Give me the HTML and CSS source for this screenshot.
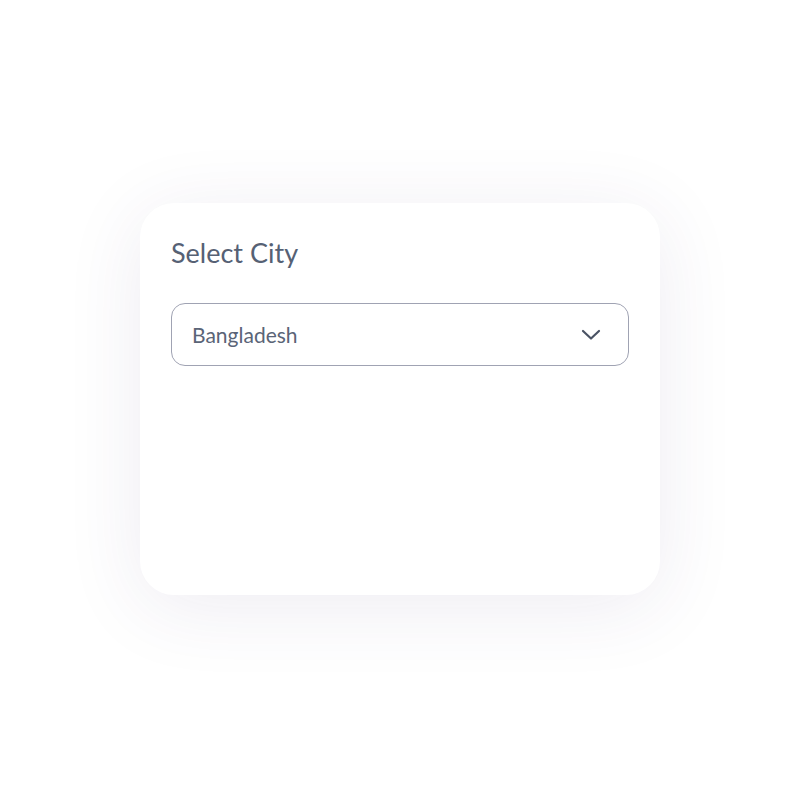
FILE: index.html
```html
<!DOCTYPE html>
<html lang="en">
<head>
  <meta charset="UTF-8">
  <meta name="viewport" content="width=device-width, initial-scale=1.0">
  <title>Select City</title>
  <link rel="stylesheet" href="styles.css">
</head>
<body>

  <div class="card">
    <h2 class="card-title">Select City</h2>
    <div class="select-box">
      <span class="select-value">Bangladesh</span>
      <svg class="select-arrow" width="20" height="12" viewBox="0 0 20 12" fill="none">
        <path d="M2 2l8 7.5L18 2" stroke="#4a5364" stroke-width="2.2" stroke-linecap="round" stroke-linejoin="round"/>
      </svg>
    </div>
  </div>

</body>
</html>
```

FILE: styles.css
```css
body {
  font-family: 'Lato', sans-serif;
  background-color: #ffffff;
  margin: 0;
  padding: 0;
  height: 800px;
  display: flex;
  justify-content: center;
  padding-top: 203px;
  box-sizing: border-box;
}

.card {
  background-color: #ffffff;
  width: 520px;
  height: 392px;
  box-sizing: border-box;
  padding: 33px 31px;
  border-radius: 34px;
  box-shadow: 0 12px 80px rgba(70, 40, 110, 0.09);
}

.card-title {
  margin: 0 0 34px;
  font-size: 27px;
  font-weight: 400;
  line-height: 33px;
  color: #566174;
}

.select-box {
  display: flex;
  align-items: center;
  justify-content: space-between;
  height: 63px;
  box-sizing: border-box;
  padding: 0 27px 0 20px;
  border: 1px solid #a0a3b3;
  border-radius: 14px;
}

.select-value {
  font-size: 21px;
  color: #5a6477;
}

.select-arrow {
  display: block;
}
```
